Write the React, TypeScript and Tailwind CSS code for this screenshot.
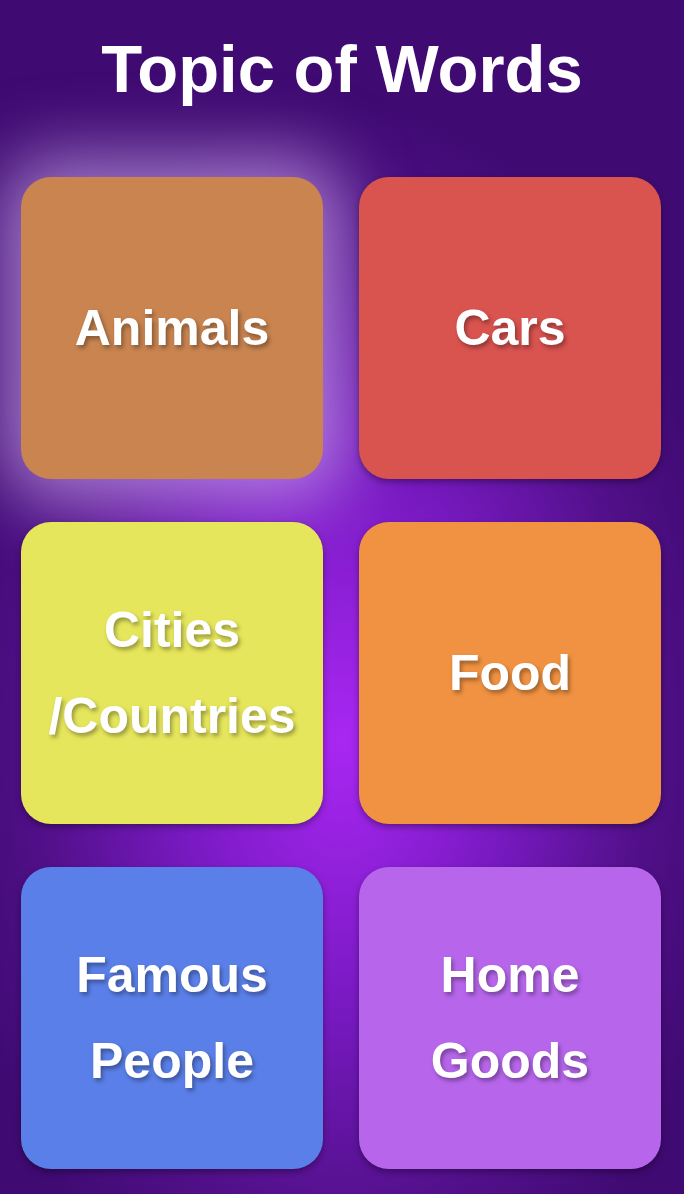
import React from "react";

const topics = [
  { label: ["Animals"], color: "bg-[#c98450]", glow: true },
  { label: ["Cars"], color: "bg-[#d9534f]" },
  { label: ["Cities", "/Countries"], color: "bg-[#e6e65c]" },
  { label: ["Food"], color: "bg-[#f09242]" },
  { label: ["Famous", "People"], color: "bg-[#5a7fe8]" },
  { label: ["Home", "Goods"], color: "bg-[#b766ec]" },
];

const TopicCard = ({
  label,
  color,
  glow,
}: {
  label: string[];
  color: string;
  glow?: boolean;
}) => {
  return (
    <div
      className={`${color} h-[302px] rounded-[30px] flex flex-col items-center justify-center text-white font-bold text-[50px] leading-[86px] ${
        glow
          ? "shadow-[0_0_70px_22px_rgba(225,195,255,0.6)]"
          : "shadow-[0_3px_6px_rgba(0,0,0,0.35)]"
      } [text-shadow:2px_3px_4px_rgba(0,0,0,0.35)]`}
    >
      {label.map((l) => (
        <span key={l}>{l}</span>
      ))}
    </div>
  );
};

export default function App() {
  return (
    <div className="w-[684px] h-[1194px] overflow-hidden font-['Liberation_Sans',Arial,sans-serif] bg-[radial-gradient(ellipse_400px_640px_at_50%_62%,#a927f2_0%,#7a1ac4_40%,#52108a_75%,#3f0a72_100%)] bg-[#3f0a72]">
      {/* title */}
      <h1 className="pt-[35px] pb-[75px] text-center text-white font-bold text-[67px] leading-[67px]">
        Topic of Words
      </h1>
      {/* grid */}
      <div className="grid grid-cols-[302px_302px] gap-x-[36px] gap-y-[43px] px-[21px]">
        {topics.map((t) => (
          <TopicCard key={t.label.join("")} {...t} />
        ))}
      </div>
    </div>
  );
}
